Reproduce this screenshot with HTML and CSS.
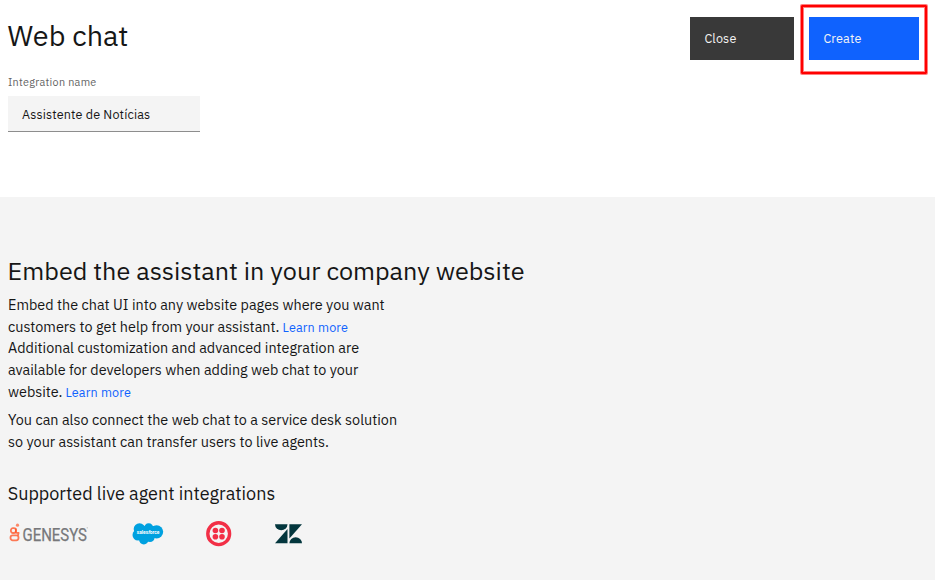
FILE: index.html
```html
<!DOCTYPE html>
<html lang="en">
<head>
<meta charset="utf-8">
<title>Web chat</title>
<link rel="stylesheet" href="styles.css">
</head>
<body>
<header class="header">
  <div class="intro">
    <h1 class="title">Web chat</h1>
    <div class="label">Integration name</div>
    <div class="field"><span>Assistente de Notícias</span></div>
  </div>
  <div class="actions">
    <button class="button close">Close</button>
    <div class="highlight"><button class="button create">Create</button></div>
  </div>
</header>
<main class="content">
  <h2 class="heading">Embed the assistant in your company website</h2>
  <p class="copy first">Embed the chat UI into any website pages where you want<br>customers to get help from your assistant. <a class="link">Learn more</a></p>
  <p class="copy custom">Additional customization and advanced integration are<br>available for developers when adding web chat to your<br>website. <a class="link">Learn more</a></p>
  <p class="copy">You can also connect the web chat to a service desk solution<br>so your assistant can transfer users to live agents.</p>
  <h3 class="subheading">Supported live agent integrations</h3>
  <div class="logos">
    <svg class="genesys" width="82" height="28" viewBox="0 0 82 28">
      <g fill="none" stroke="#ff4f1f" stroke-opacity=".75" stroke-width="1.8"><rect x="2.9" y="8.2" width="5" height="4.8" rx="2"/><rect x="2.5" y="15.3" width="8" height="5" rx="2.2"/><path d="M7.9 8.5v3.5q0 1.3 3.5 .8M10.2 12.5v3"/></g>
      <circle cx="9.5" cy="5.2" r="1.6" fill="#ff4f1f" fill-opacity=".65"/>
      <text class="genesys-name" x="14.5" y="20.6" textLength="64.5" lengthAdjust="spacingAndGlyphs">GENESYS</text>
      <circle cx="79.2" cy="7.8" r=".6" fill="#aaa"/>
    </svg>
    <svg class="salesforce" width="32" height="24" viewBox="0 0 32 24">
      <g fill="#00a1e0"><circle cx="7.5" cy="7" r="5.8"/><circle cx="16.7" cy="6" r="4.7"/><circle cx="24.6" cy="9.8" r="6.6"/><circle cx="6" cy="13" r="5.5"/><circle cx="11.8" cy="17.6" r="4.8"/><circle cx="18" cy="15.5" r="4.6"/><path d="M7 4h15v14H7z"/></g>
      <text class="salesforce-name" x="4.7" y="12.3" textLength="22.7" lengthAdjust="spacingAndGlyphs">sales<tspan font-style="italic">f</tspan>orce</text>
    </svg>
    <svg class="twilio" width="26" height="26" viewBox="0 0 26 26">
      <circle cx="12.7" cy="12.7" r="10.9" fill="none" stroke="#f22f46" stroke-width="3.4"/>
      <g fill="#f22f46"><circle cx="9.4" cy="9.5" r="2.8"/><circle cx="16" cy="9.5" r="2.8"/><circle cx="9.4" cy="15.8" r="2.8"/><circle cx="16" cy="15.8" r="2.8"/></g>
    </svg>
    <svg class="zendesk" width="28" height="20" viewBox="0 0 28 20">
      <g fill="#03363d"><path d="M0 .3h12.5a6.25 5.9 0 0 1-12.5 0z"/><path d="M12.5 5v14.3H0z"/><path d="M14.4.3H27L14.4 14.6z"/><path d="M14.4 19.3a6.3 6 0 0 1 12.6 0z"/></g>
    </svg>
  </div>
</main>
</body>
</html>
```
FILE: styles.css
```css
* { box-sizing: border-box; }
body { margin: 0; background: #fff; color: #161616; font-family: "IBM Plex Sans", Roboto, sans-serif; }
h1, h2, h3, p { margin: 0; font-weight: 400; white-space: nowrap; }
.header { height: 197px; display: flex; justify-content: space-between; align-items: flex-start; padding: 4px 7px 0 8px; }
.title { margin: 13px 0 21px -.4px; font-size: 28.8px; line-height: 36px; }
.label { height: 16px; font-size: 10.8px; line-height: 16px; letter-spacing: .288px; color: #636363; }
.field { margin-top: 6px; width: 192px; height: 36px; padding-left: 14px; background: #f4f4f4; border-bottom: 1px solid #8d8d8d; font-size: 12.6px; line-height: 36px; letter-spacing: .144px; }
.actions { display: flex; gap: 6px; }
.button { display: block; height: 43px; padding: 0 0 0 14.4px; border: 0; color: #f4f4f4; font: 12.6px/43px "IBM Plex Sans", Roboto, sans-serif; letter-spacing: .144px; text-align: left; }
.close { width: 104px; margin-top: 13px; background: #393939; }
.create { width: 110px; background: #0f62fe; }
.highlight { width: 126px; height: 69px; margin: 1px; padding: 10px 6px; border: 2px solid #f00; border-radius: 1px; box-shadow: 0 0 0 1px rgba(255, 0, 0, .5), inset 0 0 0 1px rgba(255, 0, 0, .5); }
.content { height: 383px; padding: 58px 8px 0; background: #f4f4f4; }
.heading { margin-left: -.4px; font-size: 25.2px; line-height: 32px; }
.copy { margin-top: 6px; font-size: 14.4px; line-height: 22px; }
.first { margin-top: 7px; }
.custom { margin-top: -1px; }
.link { margin-left: -.3px; color: #0f62fe; font-size: 12.6px; line-height: 12px; letter-spacing: .144px; }
.subheading { margin: 27px 0 0 -.3px; font-size: 18px; line-height: 27px; }
.logos { display: flex; align-items: center; height: 28px; margin-top: 12.5px; }
.genesys { overflow: visible; }
.genesys-name { font: 18.2px "Liberation Sans Narrow", Roboto, sans-serif; fill: #77787b; stroke: #77787b; stroke-width: .25px; }
.salesforce { margin-left: 42px; }
.salesforce-name { font: bold 5.5px Roboto, sans-serif; fill: #fff; }
.twilio { margin-left: 42px; }
.zendesk { margin-left: 43px; }
```
